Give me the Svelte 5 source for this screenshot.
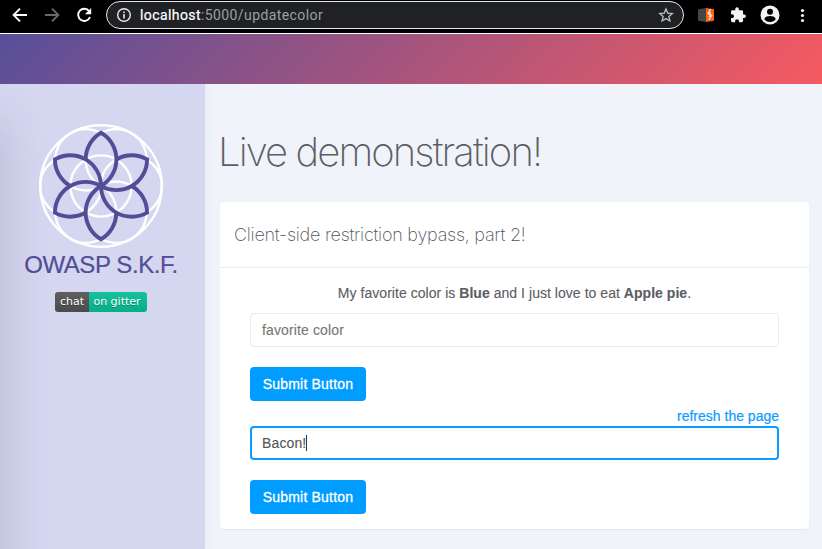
<script>
  const turns = [0, 60, 120, 180, 240, 300];
  let color = $state('');
  let food = $state('Bacon!');
</script>

<div class="page">
  <header class="browser">
    <svg class="nav" width="106" height="33" viewBox="0 0 106 33" fill="none" stroke-width="1.9">
      <path d="M27 15H14M20 8.6L13.6 15l6.4 6.4" stroke="#fff" />
      <path d="M45 15H58M52 8.6l6.4 6.4-6.4 6.4" stroke="#69696b" />
      <path d="M89.2 11.2A6.1 6.1 0 1 0 90 17" stroke="#fff" />
      <path d="M91.2 8v6.3h-6.3z" fill="#fff" />
    </svg>
    <div class="address">
      <svg width="16" height="16" viewBox="0 0 16 16" fill="none">
        <circle cx="8" cy="8" r="6.3" stroke="#e8eaed" stroke-width="1.4" />
        <path d="M8 7v4.4M8 4.4v1.7" stroke="#e8eaed" stroke-width="1.6" />
      </svg>
      <span class="url"><b>localhost</b>:5000/updatecolor</span>
      <svg width="16" height="16" viewBox="0 0 16 16" fill="none" stroke="#bdc1c6" stroke-width="1.3">
        <path d="M8 1.9l1.75 4.2 4.55.4-3.45 3 1.05 4.45L8 11.6l-3.9 2.35 1.05-4.45-3.45-3 4.55-.4z" />
      </svg>
    </div>
    <svg class="tools" width="138" height="33" viewBox="684 0 138 33">
      <path d="M698 9.3l8-1.3v14l-8-1.3z" fill="#464646" />
      <path d="M706 8l8 1.3v11.4l-8 1.3z" fill="#ff6113" />
      <path d="M710.600 9l-2.600 4.600 3.800 1.800-3 4.600M708 13.600l3-.8M711.800 15.400l-3.300 1.100" fill="none" stroke="#ffe9df" stroke-width="1.200" />
      <path transform="translate(729.6 6.6) scale(.71)" fill="#f1f3f4" d="M20.5 11H19V7c0-1.1-.9-2-2-2h-4V3.500a2.500 2.500 0 0 0-5 0V5H4c-1.100 0-2 .9-2 2v3.800h1.500c1.500 0 2.700 1.200 2.700 2.700S5 16.200 3.500 16.200H2V20c0 1.100.9 2 2 2h3.800v-1.500c0-1.500 1.200-2.700 2.700-2.700s2.700 1.200 2.700 2.700V22H17c1.100 0 2-.9 2-2v-4h1.500a2.500 2.500 0 0 0 0-5z" />
      <circle cx="770" cy="15" r="9.5" fill="#f1f3f4" />
      <circle cx="770" cy="11.800" r="3" fill="#000" />
      <path d="M764.200 19c1-2.400 3.500-3 5.800-3s4.800.6 5.800 3c-1.200 1.900-3.300 3-5.800 3s-4.600-1.100-5.800-3z" fill="#000" />
      <g fill="#f1f3f4"><circle cx="802.500" cy="10.500" r="1.600" /><circle cx="802.500" cy="15.500" r="1.600" /><circle cx="802.500" cy="20.500" r="1.600" /></g>
    </svg>
  </header>
  <div class="banner"></div>

  <div class="body">
    <aside>
      <svg class="logo" width="124" height="124" viewBox="-62 -62 124 124" fill="none">
        <g stroke="#fff" stroke-width="2.400">
          <circle r="60.800" />
          <circle r="30.600" />
          {#each turns as turn}
            <circle cx="30.300" r="30.600" transform="rotate({turn})" />
          {/each}
        </g>
        <g stroke="#534d98" stroke-width="3.900">
          {#each turns as turn}
            <path d="M0 0A30.700 30.700 0 0 0 0-53.200A30.700 30.700 0 0 0-15.300-26.600" transform="rotate({turn})" />
          {/each}
        </g>
      </svg>
      <div class="brand">OWASP S.K.F.</div>
      <div class="badge"><span>chat</span><span class="green">on gitter</span></div>
    </aside>

    <main>
      <h1>Live demonstration!</h1>
      <section class="card">
        <h2>Client-side restriction bypass, part 2!</h2>
        <div class="content">
          <p>My favorite color is <b>Blue</b> and I just love to eat <b>Apple pie</b>.</p>
          <input class="field" placeholder="favorite color" bind:value={color} />
          <button>Submit Button</button>
          <a href="#refresh">refresh the page</a>
          <div class="field active"><span>{food}</span><i></i></div>
          <button>Submit Button</button>
        </div>
      </section>
    </main>
  </div>
</div>

<style>
  :global(body) { margin: 0; overflow: hidden; }
  .page {
    width: 822px; height: 549px; overflow: hidden; display: flex; flex-direction: column;
    background: #f0f3f9; font: 14px/20px "Liberation Sans", Arial, sans-serif; color: #5b5e64;
  }
  .browser { height: 33px; display: flex; background: #000; border-bottom: 1px solid #fff; flex: none; }
  .browser > svg { display: block; flex: none; }
  .address {
    box-sizing: border-box; width: 578px; height: 28px; margin-top: 1px; padding: 0 9px;
    display: flex; align-items: center; border: 1px solid #e8e8ea; border-radius: 14px; background: #202124;
  }
  .url { flex: 1; margin-left: 8px; font: 14px/20px Roboto, sans-serif; letter-spacing: .41px; color: #9aa0a6; white-space: nowrap; }
  .url b { font-weight: 400; color: #fff; -webkit-text-stroke: .2px #fff; }
  .banner { height: 50px; flex: none; background: linear-gradient(135deg, #574f9a, #f65a60); }
  .body { flex: 1; display: flex; min-height: 0; }
  aside {
    box-sizing: border-box; padding-right: 3px;
    position: relative; width: 205px; flex: none; background: #d5d6f0;
    display: flex; flex-direction: column; align-items: center; box-shadow: 0 0 10px rgba(60, 60, 90, .06);
    clip-path: inset(0 -12px 0 0);
  }
  aside::before { content: ""; position: absolute; left: -20px; top: 40px; bottom: -60px; width: 20px; box-shadow: 0 0 40px 2px rgba(70, 70, 90, .25); }
  .logo { display: block; margin-top: 40px; position: relative; }
  .brand { margin-top: 3px; font-size: 24px; line-height: 28px; letter-spacing: -.42px; color: #534d98; -webkit-text-stroke: .2px #534d98; white-space: nowrap; }
  .badge {
    margin-top: 13px; width: 92px; height: 20px; display: flex; overflow: hidden; border-radius: 3px;
    font: 11px/20px "DejaVu Sans", sans-serif; color: #fff; text-shadow: 0 1px rgba(0, 0, 0, .3);
  }
  .badge span { width: 34px; text-align: center; background: linear-gradient(#5f5f5f, #4b4b4b); white-space: nowrap; }
  .badge .green { box-sizing: border-box; width: 58px; padding-right: 2px; background: linear-gradient(#16c19d, #06ae89); }
  main { flex: 1; padding: 0 13px 0 15px; }
  h1 { margin: 44px 0 0 -2px; font: 200 40px/48px Inter, sans-serif; letter-spacing: -1.9px; color: #5b5e64; white-space: nowrap; }
  .card { height: 327px; margin-top: 26px; border-radius: 4px; background: #fff; box-shadow: 0 1px 1px rgba(0, 0, 0, .06); }
  h2 {
    box-sizing: border-box; height: 66px; margin: 0; padding-left: 14px; border-bottom: 1px solid #e9eaec;
    font: 200 18px/65px Inter, sans-serif; letter-spacing: -.24px; color: #505359;
  }
  .content { padding: 15px 30px; display: flex; flex-direction: column; align-items: flex-start; }
  p { margin: 0 0 10px; align-self: center; white-space: nowrap; letter-spacing: .04px; -webkit-text-stroke: .12px; }
  .field {
    box-sizing: border-box; width: 100%; height: 34px; border: 1px solid #e9eaec; border-radius: 4px;
    padding: 0 11px; background: #fff; font: inherit; letter-spacing: .13px; color: #555; outline: none; -webkit-text-stroke: .1px;
  }
  .field::placeholder { color: #757575; opacity: 1; }
  .active { border: 2px solid #0a9dff; padding: 0 10px; display: flex; align-items: center; }
  .active i { width: 1px; height: 16px; background: #333; }
  button {
    height: 34px; width: 116px; margin-top: 20px; padding: 0; border: 0; border-radius: 4px; background: #009dff;
    color: #fff; font: inherit; letter-spacing: .2px; -webkit-text-stroke: .3px #fff; white-space: nowrap;
  }
  a { align-self: flex-end; margin: 5px 0 0; color: #0a9dff; text-decoration: none; -webkit-text-stroke: .2px; }
</style>
